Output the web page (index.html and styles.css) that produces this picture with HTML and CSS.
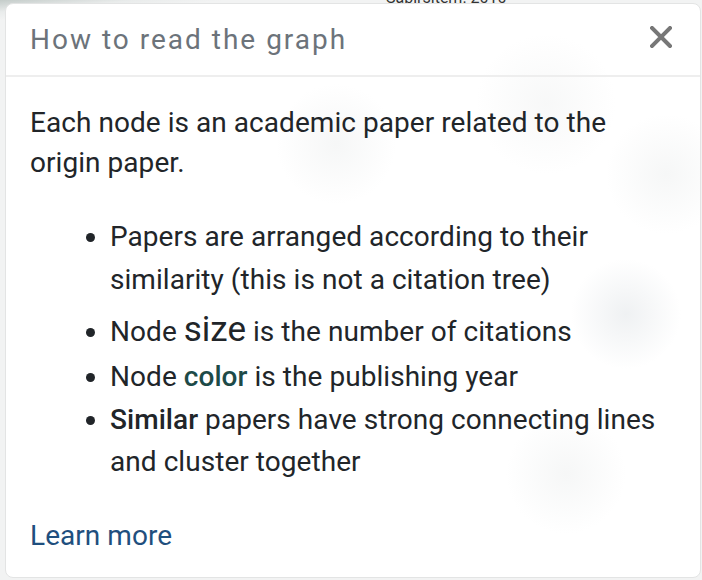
FILE: index.html
```html
<!DOCTYPE html>
<html lang="en">
<head>
<meta charset="utf-8">
<title>How to read the graph</title>
<link rel="stylesheet" href="styles.css">
</head>
<body>
<div class="backdrop">
  <span class="bg-label">Sabirsitem. 2010</span>
</div>
<section class="card">
  <header class="card-header">
    <h2 class="card-title">How to read the graph</h2>
    <button class="close" aria-label="Close">
      <svg width="22" height="22" viewBox="0 0 22 22"><path d="M2 2 L20 20 M20 2 L2 20" stroke="#777" stroke-width="4" stroke-linecap="square" fill="none"/></svg>
    </button>
  </header>
  <div class="card-body">
    <p class="intro">Each node is an academic paper related to the origin paper.</p>
    <ul class="rules">
      <li>Papers are arranged according to their similarity (this is not a citation tree)</li>
      <li class="size-item">Node <span class="big">size</span> is the number of citations</li>
      <li>Node <span class="colored">color</span> is the publishing year</li>
      <li><span class="strong">Similar</span> papers have strong connecting lines and cluster together</li>
    </ul>
    <a class="learn" href="#">Learn more</a>
  </div>
</section>
</body>
</html>
```
FILE: styles.css
```css
html, body {
  margin: 0;
  padding: 0;
}
body {
  width: 702px;
  height: 580px;
  overflow: hidden;
  position: relative;
  background: #eef0f0;
  font-family: Roboto, "Noto Sans", sans-serif;
}
.backdrop {
  position: absolute;
  inset: 0;
  background:
    linear-gradient(175deg, rgba(150,165,160,0.5) 0, rgba(220,225,224,0.4) 12px, transparent 20px),
    #f2f3f3;
}
.bg-label {
  position: absolute;
  left: 386px;
  top: -12px;
  font-size: 16px;
  color: #333;
}
.card {
  position: absolute;
  left: 5px;
  top: 3px;
  width: 696px;
  height: 575px;
  box-sizing: border-box;
  border: 1px solid #e3e4e4;
  border-radius: 8px;
  background:
    radial-gradient(circle at 330px 140px, rgba(225,228,228,0.3) 0, transparent 60px),
    radial-gradient(circle at 620px 310px, rgba(215,220,224,0.4) 0, transparent 55px),
    radial-gradient(circle at 660px 170px, rgba(225,228,228,0.3) 0, transparent 60px),
    radial-gradient(circle at 560px 470px, rgba(225,228,228,0.3) 0, transparent 60px),
    radial-gradient(circle at 540px 100px, rgba(230,232,232,0.3) 0, transparent 70px),
    rgba(255,255,255,0.98);
  display: flex;
  flex-direction: column;
}
.card-header {
  height: 73px;
  box-sizing: border-box;
  border-bottom: 2px solid #eeeeee;
  display: flex;
  align-items: center;
  justify-content: space-between;
  padding: 0 28px 0 24px;
}
.card-title {
  margin: 0;
  font-size: 28px;
  font-weight: 400;
  letter-spacing: 2px;
  color: #6c737a;
}
.close {
  border: 0;
  background: none;
  padding: 0;
  width: 22px;
  height: 22px;
  display: flex;
  margin-top: -6px;
}
.card-body {
  padding: 26px 24px 0 24px;
  color: #212529;
  font-size: 28px;
  letter-spacing: 0.05px;
  line-height: 40px;
}
.intro {
  margin: 0 0 33px 0;
}
.rules {
  margin: 0 0 32px 0;
  padding-left: 80px;
  line-height: 42.5px;
}
.size-item {
  padding-top: 3px;
}
.big {
  font-size: 35px;
  line-height: 52px;
  letter-spacing: 0;
}
.colored {
  color: #1d4a48;
  font-weight: 500;
}
.strong {
  font-weight: 500;
}
.learn {
  color: #1f4f7e;
  text-decoration: none;
  display: inline-block;
}
```
